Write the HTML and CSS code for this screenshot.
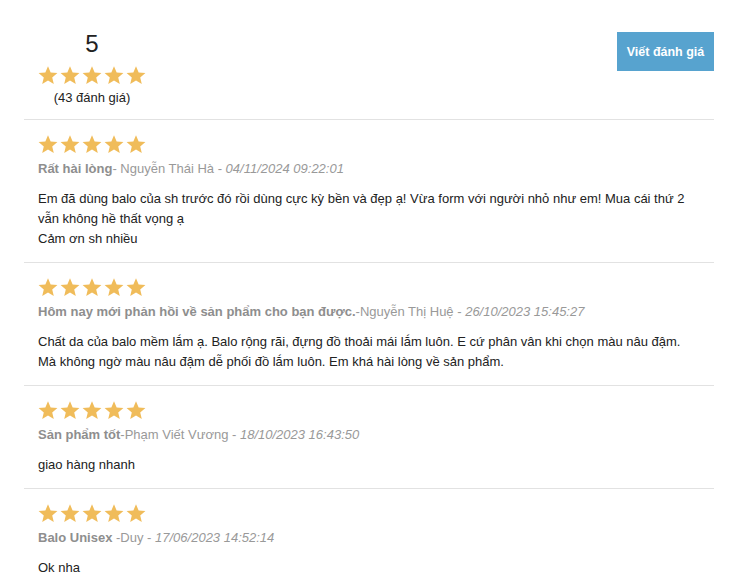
FILE: index.html
```html
<!DOCTYPE html>
<html lang="vi">
<head>
<meta charset="utf-8">
<title>Đánh giá</title>
<link rel="stylesheet" href="styles.css">
</head>
<body>
<svg width="0" height="0" class="defs">
  <defs>
    <symbol id="star" viewBox="0 0 24 23">
      <polygon points="12,0.4 15.2,7.9 23.4,8.5 17.1,13.8 19,21.9 12,17.5 5,21.9 6.9,13.8 0.6,8.5 8.8,7.9"/>
    </symbol>
  </defs>
</svg>
<div class="reviews">
  <div class="summary">
    <div class="score">
      <div class="score-num">5</div>
      <div class="stars">
        <svg class="star"><use href="#star"/></svg><svg class="star"><use href="#star"/></svg><svg class="star"><use href="#star"/></svg><svg class="star"><use href="#star"/></svg><svg class="star"><use href="#star"/></svg>
      </div>
      <div class="score-count">(43 đánh giá)</div>
    </div>
    <button class="write-btn">Viết đánh giá</button>
  </div>

  <div class="review">
    <div class="stars">
      <svg class="star"><use href="#star"/></svg><svg class="star"><use href="#star"/></svg><svg class="star"><use href="#star"/></svg><svg class="star"><use href="#star"/></svg><svg class="star"><use href="#star"/></svg>
    </div>
    <div class="meta"><b>Rất hài lòng</b>- Nguyễn Thái Hà - <i>04/11/2024 09:22:01</i></div>
    <div class="body">Em đã dùng balo của sh trước đó rồi dùng cực kỳ bền và đẹp ạ! Vừa form với người nhỏ như em! Mua cái thứ 2 vẫn không hề thất vọng ạ<br>Cảm ơn sh nhiều</div>
  </div>

  <div class="review">
    <div class="stars">
      <svg class="star"><use href="#star"/></svg><svg class="star"><use href="#star"/></svg><svg class="star"><use href="#star"/></svg><svg class="star"><use href="#star"/></svg><svg class="star"><use href="#star"/></svg>
    </div>
    <div class="meta"><b>Hôm nay mới phản hồi về sản phẩm cho bạn được.</b>-Nguyễn Thị Huệ - <i>26/10/2023 15:45:27</i></div>
    <div class="body">Chất da của balo mềm lắm ạ. Balo rộng rãi, đựng đồ thoải mái lắm luôn. E cứ phân vân khi chọn màu nâu đậm. Mà không ngờ màu nâu đậm dễ phối đồ lắm luôn. Em khá hài lòng về sản phẩm.</div>
  </div>

  <div class="review">
    <div class="stars">
      <svg class="star"><use href="#star"/></svg><svg class="star"><use href="#star"/></svg><svg class="star"><use href="#star"/></svg><svg class="star"><use href="#star"/></svg><svg class="star"><use href="#star"/></svg>
    </div>
    <div class="meta"><b>Sản phẩm tốt</b>-Phạm Viết Vương - <i>18/10/2023 16:43:50</i></div>
    <div class="body">giao hàng nhanh</div>
  </div>

  <div class="review">
    <div class="stars">
      <svg class="star"><use href="#star"/></svg><svg class="star"><use href="#star"/></svg><svg class="star"><use href="#star"/></svg><svg class="star"><use href="#star"/></svg><svg class="star"><use href="#star"/></svg>
    </div>
    <div class="meta"><b>Balo Unisex </b>-Duy - <i>17/06/2023 14:52:14</i></div>
    <div class="body">Ok nha</div>
  </div>
</div>
</body>
</html>
```
FILE: styles.css
```css
* { box-sizing: border-box; }
html, body { margin: 0; padding: 0; background: #fff; }
body {
  font-family: "Liberation Sans", Arial, sans-serif;
  color: #222;
  font-size: 13px;
}
.defs { position: absolute; width: 0; height: 0; overflow: hidden; }

.reviews {
  width: 690px;
  margin-left: 24px;
}

.summary {
  display: flex;
  justify-content: space-between;
  align-items: flex-start;
  padding: 30px 0 13px 14px;
}
.score {
  display: flex;
  flex-direction: column;
  align-items: center;
  width: 108px;
}
.score-num {
  font-size: 24px;
  line-height: 28px;
  color: #222;
}
.score .stars { margin-top: 8px; }
.score-count {
  margin-top: 5px;
  font-size: 13px;
  line-height: 16px;
  color: #222;
}

.write-btn {
  margin-top: 2px;
  width: 97px;
  height: 39px;
  border: 0;
  padding: 0;
  background: #57a3cf;
  color: #fff;
  font-family: "Liberation Sans", Arial, sans-serif;
  font-weight: bold;
  font-size: 12.5px;
  cursor: pointer;
}

.stars {
  display: flex;
  gap: 2px;
  height: 19px;
}
.star {
  width: 20px;
  height: 19px;
  fill: #f0bc5a;
}

.review {
  border-top: 1px solid #e2e2e2;
  padding: 15px 14px 13px 14px;
}
.meta {
  margin-top: 7px;
  font-size: 13px;
  line-height: 16px;
  color: #999;
}
.meta b { font-weight: bold; color: #8e8e8e; }
.meta i { font-style: italic; }
.body {
  margin-top: 12px;
  font-size: 13px;
  line-height: 20px;
  color: #222;
}
```
